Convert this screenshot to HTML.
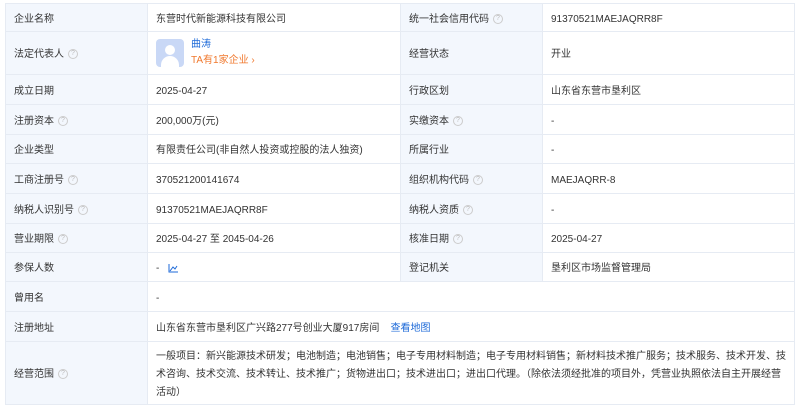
<!DOCTYPE html>
<html><head><meta charset="utf-8"><style>
*{margin:0;padding:0;box-sizing:border-box}
body{width:800px;height:410px;background:#fff;font-family:"Liberation Sans","Noto Sans CJK SC",sans-serif;font-size:10px;color:#333;overflow:hidden;position:relative}
.r{position:absolute;left:5px;width:790px;display:flex;border-bottom:1px solid #e6ebf3}
.r>div{display:block;padding:2px 8px 0;border-left:1px solid #e6ebf3;white-space:nowrap;line-height:inherit;overflow:hidden}
.r>div:last-child{border-right:1px solid #e6ebf3}
.l{background:#f3f7fd;width:142px;flex:none}
.v{width:253px;flex:none}
.w{flex:1}
.q{display:inline-block;width:10px;height:10px;border:1px solid #ccc;border-radius:50%;color:#bbb;font-size:7px;line-height:8px;text-align:center;margin-left:4px;vertical-align:middle}
a{color:#1e6ad8;text-decoration:none}
.av{display:inline-block;width:28px;height:28px;background:#c9d8f6;border-radius:4px;position:relative;overflow:hidden;flex:none}
.av:before{content:"";position:absolute;left:9px;top:6px;width:10px;height:10px;border-radius:50%;background:#fff}
.av:after{content:"";position:absolute;left:5px;top:17px;width:18px;height:14px;border-radius:9px 9px 0 0;background:#fff}
</style></head><body>
<div class="r" style="top:3px;height:29px;line-height:28px;border-top:1px solid #e6ebf3"><div class="l">企业名称</div><div class="v">东营时代新能源科技有限公司</div><div class="l">统一社会信用代码<span class="q">?</span></div><div class="w">91370521MAEJAQRR8F</div></div>
<div class="r" style="top:32px;height:43px;line-height:42px"><div class="l">法定代表人<span class="q">?</span></div><div class="v" style="display:flex;align-items:center;padding-top:0"><span class="av"></span><span style="margin-left:7px;line-height:16px"><a>曲涛</a><br><span style="color:#f0782d">TA有1家企业 ›</span></span></div><div class="l">经营状态</div><div class="w">开业</div></div>
<div class="r" style="top:75px;height:30px;line-height:29px"><div class="l">成立日期</div><div class="v">2025-04-27</div><div class="l">行政区划</div><div class="w">山东省东营市垦利区</div></div>
<div class="r" style="top:105px;height:30px;line-height:29px"><div class="l">注册资本<span class="q">?</span></div><div class="v">200,000万(元)</div><div class="l">实缴资本<span class="q">?</span></div><div class="w">-</div></div>
<div class="r" style="top:135px;height:29px;line-height:28px"><div class="l">企业类型</div><div class="v">有限责任公司(非自然人投资或控股的法人独资)</div><div class="l">所属行业</div><div class="w">-</div></div>
<div class="r" style="top:164px;height:30px;line-height:29px"><div class="l">工商注册号<span class="q">?</span></div><div class="v">370521200141674</div><div class="l">组织机构代码<span class="q">?</span></div><div class="w">MAEJAQRR-8</div></div>
<div class="r" style="top:194px;height:30px;line-height:29px"><div class="l">纳税人识别号<span class="q">?</span></div><div class="v">91370521MAEJAQRR8F</div><div class="l">纳税人资质<span class="q">?</span></div><div class="w">-</div></div>
<div class="r" style="top:224px;height:29px;line-height:28px"><div class="l">营业期限<span class="q">?</span></div><div class="v">2025-04-27 至 2045-04-26</div><div class="l">核准日期<span class="q">?</span></div><div class="w">2025-04-27</div></div>
<div class="r" style="top:253px;height:29px;line-height:28px"><div class="l">参保人数</div><div class="v">- &nbsp;<svg width="10" height="9" viewBox="0 0 10 9" style="margin-left:3px;vertical-align:middle"><path d="M1 0V8H10M2 7L5 3L7 5L9 2" fill="none" stroke="#1e6ad8" stroke-width="1"/></svg></div><div class="l">登记机关</div><div class="w">垦利区市场监督管理局</div></div>
<div class="r" style="top:282px;height:30px;line-height:29px"><div class="l">曾用名</div><div class="w">-</div></div>
<div class="r" style="top:312px;height:30px;line-height:29px"><div class="l">注册地址</div><div class="w">山东省东营市垦利区广兴路277号创业大厦917房间 &nbsp;&nbsp;&nbsp;<a>查看地图</a></div></div>
<div class="r" style="top:342px;height:63px;line-height:62px"><div class="l">经营范围<span class="q">?</span></div><div class="w" style="white-space:normal;line-height:18px;padding-top:6px">一般项目：新兴能源技术研发；电池制造；电池销售；电子专用材料制造；电子专用材料销售；新材料技术推广服务；技术服务、技术开发、技术咨询、技术交流、技术转让、技术推广；货物进出口；技术进出口；进出口代理。（除依法须经批准的项目外，凭营业执照依法自主开展经营活动）</div></div>
</body></html>
